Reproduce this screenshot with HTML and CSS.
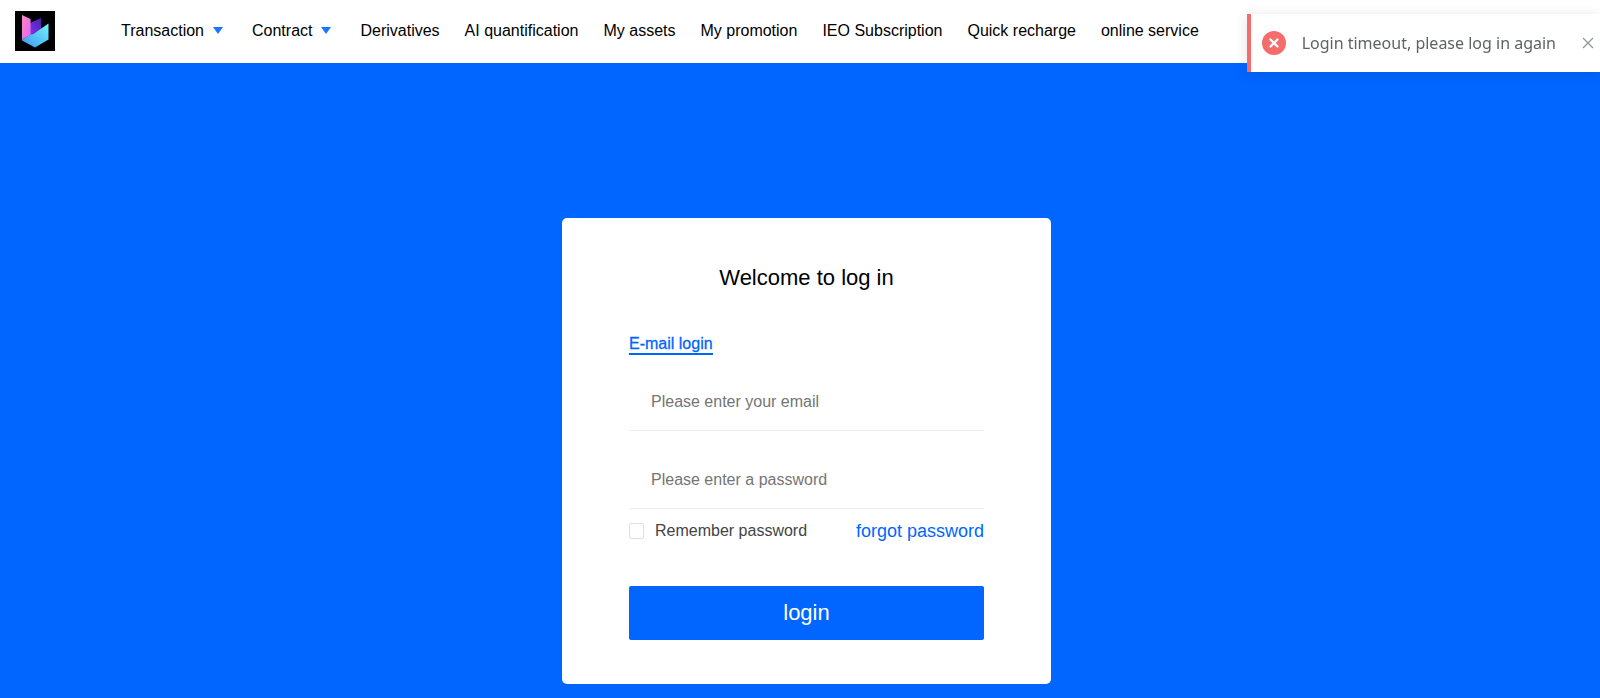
FILE: index.html
```html
<!DOCTYPE html>
<html lang="en">
<head>
<meta charset="utf-8">
<title>Log in</title>
<link rel="stylesheet" href="styles.css">
</head>
<body>
<header class="header">
  <a class="logo" href="#" aria-label="Home">
    <svg viewBox="0 0 40 40" width="40" height="40" aria-hidden="true">
      <defs>
        <linearGradient id="pink" x1="0" y1="0" x2="1" y2="1"><stop offset="0" stop-color="#ff86c8"/><stop offset="1" stop-color="#d869f0"/></linearGradient>
        <linearGradient id="violet" x1="1" y1="0" x2="0" y2="1"><stop offset="0" stop-color="#4a1fb0"/><stop offset="1" stop-color="#8436ee"/></linearGradient>
        <linearGradient id="cyan" x1="1" y1="0" x2="0" y2="1"><stop offset="0" stop-color="#70f4f8"/><stop offset="1" stop-color="#3f94f5"/></linearGradient>
      </defs>
      <rect width="40" height="40" fill="#000"/>
      <path d="M15 12 26 7v11L15 25z" fill="url(#violet)"/>
      <path d="M7 4l8.6 4v16L7 28.5z" fill="url(#pink)"/>
      <path d="M7 28.5l8.6-4.7 2.6-.8L33.5 12.5v16L20 36.5 7 29.5z" fill="url(#cyan)"/>
    </svg>
  </a>
  <nav class="nav">
    <a class="nav-link" href="#">Transaction<span class="caret"></span></a>
    <a class="nav-link" href="#">Contract<span class="caret"></span></a>
    <a class="nav-link" href="#">Derivatives</a>
    <a class="nav-link" href="#">AI quantification</a>
    <a class="nav-link" href="#">My assets</a>
    <a class="nav-link" href="#">My promotion</a>
    <a class="nav-link" href="#">IEO Subscription</a>
    <a class="nav-link" href="#">Quick recharge</a>
    <a class="nav-link" href="#">online service</a>
  </nav>
</header>
<main class="main">
  <form class="card">
    <h1 class="title">Welcome to log in</h1>
    <a class="tab" href="#">E-mail login</a>
    <input class="field" type="email" placeholder="Please enter your email" aria-label="Email">
    <input class="field field-password" type="password" placeholder="Please enter a password" aria-label="Password">
    <div class="options">
      <label class="remember"><input class="checkbox" type="checkbox">Remember password</label>
      <a class="forgot" href="#">forgot password</a>
    </div>
    <button class="submit" type="submit">login</button>
  </form>
</main>
<div class="toast" role="alert">
  <svg class="toast-icon" viewBox="0 0 24 24" width="24" height="24" aria-hidden="true">
    <circle cx="12" cy="12" r="12" fill="#f56c6c"/>
    <path d="M8.5 8.5l7 7M15.5 8.5l-7 7" stroke="#fff" stroke-width="2.4" stroke-linecap="round"/>
  </svg>
  <p class="toast-text">Login timeout, please log in again</p>
  <button class="toast-close" type="button" aria-label="Close">
    <svg viewBox="0 0 12 12" width="12" height="12" aria-hidden="true"><path d="M1 1l10 10M11 1L1 11" stroke="#909399" stroke-width="1.2" fill="none"/></svg>
  </button>
</div>
</body>
</html>
```
FILE: styles.css
```css
* { box-sizing: border-box; }

body {
  margin: 0;
  min-height: 100vh;
  display: flex;
  flex-direction: column;
  overflow-x: hidden;
  background: #06f;
  color: #000;
  font: 16px/24px "Liberation Sans", Arial, sans-serif;
}

a { text-decoration: none; color: inherit; }

.header {
  display: flex;
  align-items: center;
  height: 63px;
  padding: 0 15px 2px;
  background: #fff;
}

.logo { display: flex; margin-right: 66px; }

.nav {
  display: flex;
  gap: 25px;
  white-space: nowrap;
}

.nav-link { display: flex; align-items: center; }

.caret {
  margin: 0 4px 0 9px;
  border: 5px solid transparent;
  border-top: 7px solid #1a75ff;
  border-bottom: 0;
}

.main {
  display: flex;
  justify-content: center;
  padding: 155px 0 14px 13px;
}

.card {
  display: flex;
  flex-direction: column;
  align-items: stretch;
  width: 489px;
  max-width: 100%;
  padding: 44px 67px;
  border-radius: 5px;
  background: #fff;
}

.title {
  margin: 0;
  text-align: center;
  font-size: 22px;
  line-height: 32px;
  font-weight: 400;
}

.tab {
  align-self: flex-start;
  margin-top: 41px;
  border-bottom: 2px solid #06f;
  color: #06f;
  line-height: 18px;
  -webkit-text-stroke: 0.3px #06f;
}

.field {
  height: 58px;
  margin-top: 18px;
  padding: 0 22px;
  border: 0;
  border-bottom: 1px solid #eee;
  outline: 0;
  background: none;
  color: #333;
  font: inherit;
}

.field::placeholder { color: #757575; opacity: 1; }

.field-password { margin-top: 20px; }

.options {
  display: flex;
  justify-content: space-between;
  align-items: center;
  margin-top: 10px;
}

.remember {
  display: flex;
  align-items: center;
  gap: 11px;
  color: #444;
}

.checkbox {
  appearance: none;
  width: 15px;
  height: 16px;
  margin: 0;
  border: 1px solid #dcdfe6;
  border-radius: 2px;
  background: #fff;
}

.checkbox:checked { background: #06f; }

.forgot { color: #06f; font-size: 18px; }

.submit {
  height: 54px;
  margin-top: 43px;
  border: 0;
  border-radius: 2px;
  background: #06f;
  color: #fff;
  font: inherit;
  font-size: 22px;
}

.toast {
  position: fixed;
  top: 14px;
  right: 0;
  display: flex;
  align-items: center;
  height: 58px;
  padding: 0 6px 0 11px;
  border-left: 4px solid #f56c6c;
  background: #fff;
  box-shadow: 0 2px 12px rgba(0, 0, 0, 0.12);
}

.toast-icon { margin-right: 16px; }

.toast-text {
  margin: 0 26px 0 0;
  color: #606266;
  font: 16px/24px "Noto Sans", "Open Sans", sans-serif;
}

.toast-close {
  display: flex;
  padding: 0;
  border: 0;
  background: none;
}
```
